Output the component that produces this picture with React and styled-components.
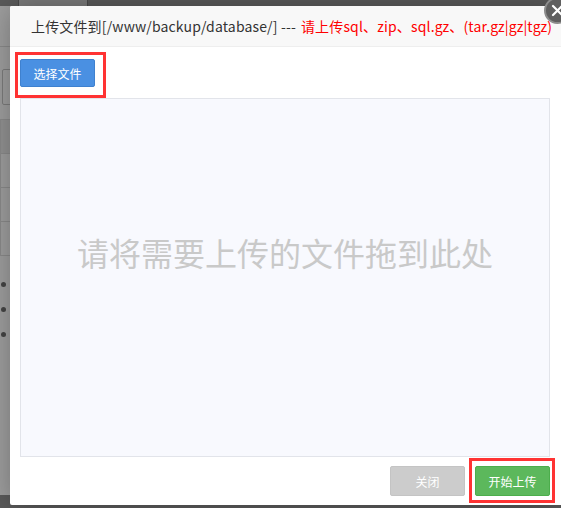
import styled, { createGlobalStyle } from 'styled-components'

const GlobalStyle = createGlobalStyle`
  html, body {
    margin: 0;
    padding: 0;
    background: #9e9e9e;
  }
  body {
    font-family: "Noto Sans CJK SC", "Liberation Sans", sans-serif;
  }
`

const Page = styled.div`
  position: relative;
  width: 561px;
  height: 508px;
  overflow: hidden;
  background: #9e9e9e;
  display: flex;
  flex-direction: column;
`

const TopBar = styled.div`
  height: 6px;
  background: #5a5a5a;
  display: flex;
  padding-left: 18px;
  flex-shrink: 0;
`

const TopTab = styled.div`
  width: 68px;
  background: #7a7a7a;
  border-left: 1px solid #4a4a4a;
  border-right: 1px solid #4a4a4a;
`

const Behind = styled.div`
  flex: 1;
  display: flex;
  flex-direction: column;
  padding-top: 40px;
`

const BehindRule = styled.div`
  height: 1px;
  background: #8a8a8a;
  margin-bottom: ${props => props.gap}px;
`

const BehindBox = styled.div`
  height: 34px;
  width: 20px;
  margin-left: 2px;
  border: 1px solid #7c7c7c;
  border-radius: 2px;
  margin-bottom: 14px;
`

const BehindRow = styled.div`
  height: 33px;
  border-left: 1px solid #8a8a8a;
  border-bottom: 1px solid #8a8a8a;
  background: ${props => (props.shaded ? '#929292' : 'transparent')};
`

const Dots = styled.ul`
  list-style: none;
  margin: 26px 0 0;
  padding: 0;
  display: flex;
  flex-direction: column;
  gap: 20px;

  > li {
    width: 5px;
    height: 5px;
    margin-left: 1px;
    border-radius: 50%;
    background: #444;
  }
`

const BottomBar = styled.div`
  height: 13px;
  background: #5a5a5a;
  flex-shrink: 0;
`

const Dialog = styled.div`
  position: absolute;
  left: 10px;
  top: 6px;
  width: 551px;
  height: 499px;
  background: #fff;
  border-radius: 2px 0 0 2px;
  box-shadow: 1px 1px 30px rgba(0, 0, 0, 0.3);
  display: flex;
  flex-direction: column;
`

const Header = styled.div`
  height: 40px;
  flex-shrink: 0;
  background: #f8f8f8;
  border-bottom: 1px solid #eee;
  border-radius: 2px 0 0 0;
  padding-left: 21px;
  display: flex;
  align-items: center;
  font-size: 14px;
  letter-spacing: 0.15px;
  color: #333;
  white-space: nowrap;
`

const Warn = styled.span`
  color: #f00;
  margin-left: 5px;
`

const CloseButton = styled.button`
  position: absolute;
  left: 534px;
  top: -9px;
  width: 27px;
  height: 27px;
  border-radius: 50%;
  background: #5f5f5f;
  border: 2px solid #8c8c8c;
  padding: 0;
  display: flex;
  align-items: center;
  justify-content: center;
`

const Body = styled.div`
  flex: 1;
  display: flex;
  flex-direction: column;
  padding: 12px 11px 0 10px;
`

const Highlight = styled.div`
  position: relative;
  align-self: flex-start;

  &::after {
    content: '';
    position: absolute;
    left: ${props => -props.x}px;
    top: ${props => -props.y}px;
    right: ${props => -props.r}px;
    bottom: ${props => -props.b}px;
    border: 3px solid #f33;
    pointer-events: none;
  }
`

const Button = styled.button`
  width: 75px;
  height: ${props => props.h}px;
  border-radius: 2px;
  border: 1px solid ${props => props.edge};
  background: ${props => props.bg};
  color: #fff;
  font-family: "Noto Sans CJK SC", "Liberation Sans", sans-serif;
  font-size: 12px;
  padding: 0;
  cursor: pointer;
`

const DropArea = styled.div`
  margin-top: 11px;
  height: 359px;
  box-sizing: border-box;
  padding-bottom: 52px;
  background: #f8f9fe;
  border: 1px solid #e2e4ea;
  display: flex;
  align-items: center;
  justify-content: center;
  font-size: 32px;
  color: #c9c9c9;
`

const Footer = styled.div`
  display: flex;
  justify-content: flex-end;
  gap: 10px;
  padding-top: 9px;
`

export default function App() {
  return (
    <>
      <GlobalStyle />
      <Page>
        <TopBar>
          <TopTab />
        </TopBar>
        <Behind>
          <BehindRule gap={22} />
          <BehindBox />
          <BehindRule gap={0} />
          <BehindRow shaded />
          <BehindRow />
          <BehindRow />
          <BehindRow />
          <Dots>
            <li />
            <li />
            <li />
          </Dots>
        </Behind>
        <BottomBar />

        <Dialog>
          <Header>
            上传文件到[/www/backup/database/] ---
            <Warn>请上传sql、zip、sql.gz、(tar.gz|gz|tgz)</Warn>
          </Header>
          <CloseButton aria-label="关闭">
            <svg width="13" height="13" viewBox="0 0 13 13">
              <path d="M2 2 L11 11 M11 2 L2 11" stroke="#fff" strokeWidth="2.2" strokeLinecap="round" />
            </svg>
          </CloseButton>
          <Body>
            <Highlight x={5} y={7} r={11} b={11}>
              <Button h={28} bg="#4a90e2" edge="#3f81cf">选择文件</Button>
            </Highlight>
            <DropArea>请将需要上传的文件拖到此处</DropArea>
            <Footer>
              <Button h={30} bg="#cccccc" edge="#c4c4c4">关闭</Button>
              <Highlight x={6} y={8} r={5} b={7}>
                <Button h={30} bg="#5cb85c" edge="#4cae4c">开始上传</Button>
              </Highlight>
            </Footer>
          </Body>
        </Dialog>
      </Page>
    </>
  )
}
